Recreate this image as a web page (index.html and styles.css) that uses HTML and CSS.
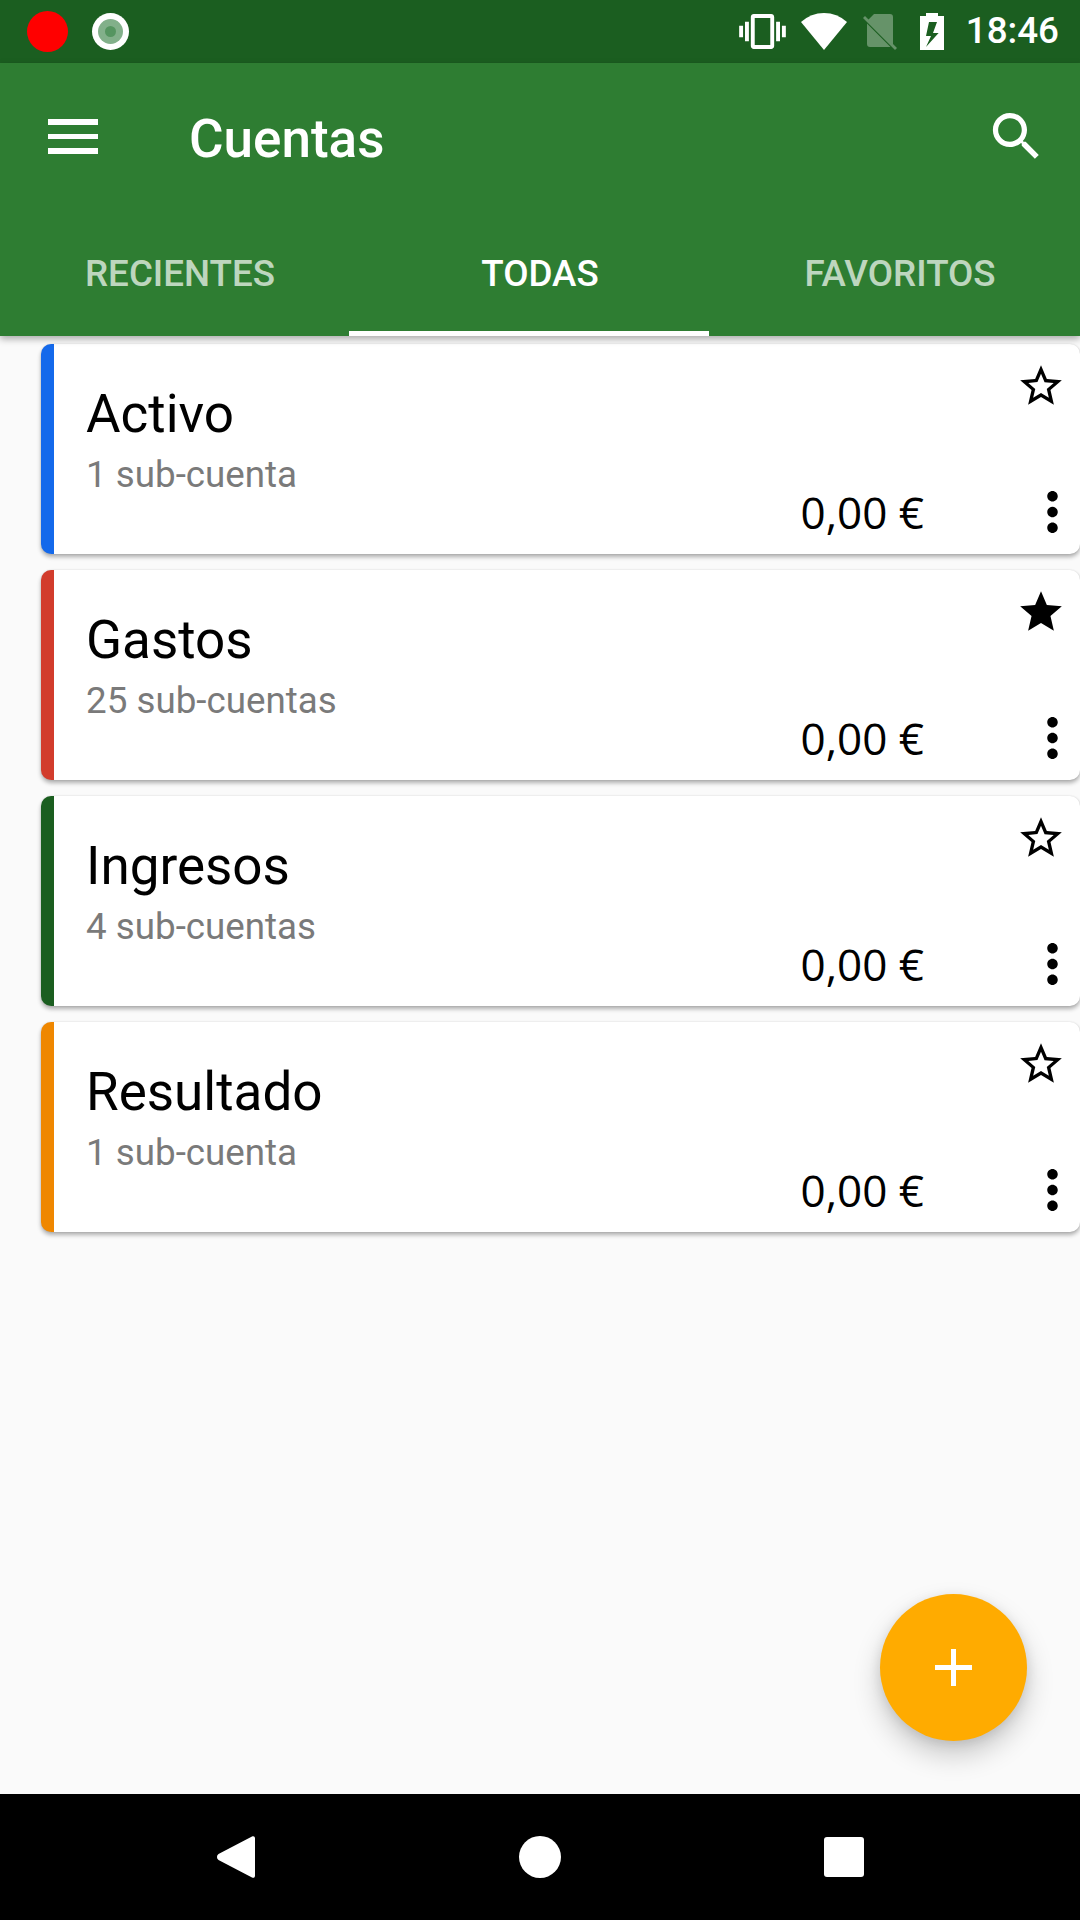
FILE: index.html
```html
<!DOCTYPE html>
<html lang="es">
<head>
<meta charset="utf-8">
<title>Cuentas</title>
<link rel="stylesheet" href="styles.css">
</head>
<body>
<div class="screen">
  <header class="statusbar">
    <div class="status-left">
      <span class="rec-dot"></span>
      <span class="rec-ring"><span class="rec-ring-inner"><span class="rec-ring-core"></span></span></span>
    </div>
    <div class="status-right">
      <svg class="ic-vibrate" viewBox="0 3 24 18"><path fill="#fff" d="M0 15h2V9H0v6zm3 2h2V7H3v10zm19-8v6h2V9h-2zm-3 8h2V7h-2v10zM16.5 3h-9C6.67 3 6 3.67 6 4.5v15c0 .83.67 1.5 1.5 1.5h9c.83 0 1.5-.67 1.5-1.5v-15c0-.83-.67-1.5-1.5-1.5zM16 19H8V5h8v14z"/></svg>
      <svg class="ic-wifi" viewBox="0 0 46 37"><path fill="#fff" d="M23 37L0 9Q10 0 23 0T46 9z"/></svg>
      <svg class="ic-sim" viewBox="0 0 36 37"><path fill="#fff" fill-opacity=".33" d="M5.500 6.500L11 1H27a3 3 0 0 1 3 3V31zM4 10.500L27.500 34H7a3 3 0 0 1-3-3zM2 3L34 35L32 37L0 5z"/></svg>
      <svg class="ic-battery" viewBox="0 0 24 37"><path fill="#fff" fill-rule="evenodd" d="M6 0h12v3h6v34H0V3h6zM9 9h8l-4 11h5.600L6 34l5-11H6z"/></svg>
      <span class="clock">18:46</span>
    </div>
  </header>

  <div class="appbar">
    <div class="toolbar">
      <svg class="ic-menu" viewBox="0 0 50 35"><path fill="#fff" d="M0 0h50v6H0zM0 15h50v5H0zM0 29h50v6H0z"/></svg>
      <h1 class="title">Cuentas</h1>
      <svg class="ic-search" viewBox="0 0 24 24"><path fill="#fff" d="M15.500 14h-.79l-.28-.27C15.410 12.590 16 11.110 16 9.500 16 5.910 13.090 3 9.500 3S3 5.910 3 9.500 5.910 16 9.500 16c1.610 0 3.090-.59 4.230-1.570l.27.28v.79l5 4.990L20.490 19l-4.990-5zm-6 0C7.010 14 5 11.990 5 9.500S7.010 5 9.500 5 14 7.010 14 9.500 11.990 14 9.500 14z"/></svg>
    </div>
    <nav class="tabs">
      <div class="tab">RECIENTES</div>
      <div class="tab tab-active">TODAS</div>
      <div class="tab">FAVORITOS</div>
    </nav>
  </div>

  <main class="content">
    <article class="card card-blue">
      <div class="card-main">
        <div class="card-title">Activo</div>
        <div class="card-sub">1 sub-cuenta</div>
      </div>
      <div class="card-amount">0,00 €</div>
      <div class="card-actions">
        <svg class="ic-star" viewBox="0 0 24 24"><path d="M22 9.240l-7.190-.62L12 2 9.190 8.630 2 9.240l5.460 4.730L5.820 21 12 17.270 18.180 21l-1.630-7.030L22 9.240zM12 15.400l-3.760 2.270 1-4.280-3.320-2.880 4.380-.38L12 6.100l1.710 4.040 4.380.38-3.320 2.880 1 4.280L12 15.400z"/></svg>
        <svg class="ic-more" viewBox="8 4 8 16"><path d="M12 8c1.100 0 2-.9 2-2s-.9-2-2-2-2 .9-2 2 .9 2 2 2zm0 2c-1.100 0-2 .9-2 2s.9 2 2 2 2-.9 2-2-.9-2-2-2zm0 6c-1.100 0-2 .9-2 2s.9 2 2 2 2-.9 2-2-.9-2-2-2z"/></svg>
      </div>
    </article>
    <article class="card card-red">
      <div class="card-main">
        <div class="card-title">Gastos</div>
        <div class="card-sub">25 sub-cuentas</div>
      </div>
      <div class="card-amount">0,00 €</div>
      <div class="card-actions">
        <svg class="ic-star" viewBox="0 0 24 24"><path d="M12 17.270L18.180 21l-1.640-7.030L22 9.240l-7.190-.61L12 2 9.190 8.630 2 9.240l5.460 4.730L5.820 21z"/></svg>
        <svg class="ic-more" viewBox="8 4 8 16"><path d="M12 8c1.100 0 2-.9 2-2s-.9-2-2-2-2 .9-2 2 .9 2 2 2zm0 2c-1.100 0-2 .9-2 2s.9 2 2 2 2-.9 2-2-.9-2-2-2zm0 6c-1.100 0-2 .9-2 2s.9 2 2 2 2-.9 2-2-.9-2-2-2z"/></svg>
      </div>
    </article>
    <article class="card card-green">
      <div class="card-main">
        <div class="card-title">Ingresos</div>
        <div class="card-sub">4 sub-cuentas</div>
      </div>
      <div class="card-amount">0,00 €</div>
      <div class="card-actions">
        <svg class="ic-star" viewBox="0 0 24 24"><path d="M22 9.240l-7.190-.62L12 2 9.190 8.630 2 9.240l5.460 4.730L5.820 21 12 17.270 18.180 21l-1.630-7.030L22 9.240zM12 15.400l-3.760 2.270 1-4.280-3.320-2.880 4.380-.38L12 6.100l1.710 4.040 4.380.38-3.320 2.880 1 4.280L12 15.400z"/></svg>
        <svg class="ic-more" viewBox="8 4 8 16"><path d="M12 8c1.100 0 2-.9 2-2s-.9-2-2-2-2 .9-2 2 .9 2 2 2zm0 2c-1.100 0-2 .9-2 2s.9 2 2 2 2-.9 2-2-.9-2-2-2zm0 6c-1.100 0-2 .9-2 2s.9 2 2 2 2-.9 2-2-.9-2-2-2z"/></svg>
      </div>
    </article>
    <article class="card card-orange">
      <div class="card-main">
        <div class="card-title">Resultado</div>
        <div class="card-sub">1 sub-cuenta</div>
      </div>
      <div class="card-amount">0,00 €</div>
      <div class="card-actions">
        <svg class="ic-star" viewBox="0 0 24 24"><path d="M22 9.240l-7.190-.62L12 2 9.190 8.630 2 9.240l5.460 4.730L5.820 21 12 17.270 18.180 21l-1.630-7.030L22 9.240zM12 15.400l-3.760 2.270 1-4.280-3.320-2.880 4.380-.38L12 6.100l1.710 4.040 4.380.38-3.320 2.880 1 4.280L12 15.400z"/></svg>
        <svg class="ic-more" viewBox="8 4 8 16"><path d="M12 8c1.100 0 2-.9 2-2s-.9-2-2-2-2 .9-2 2 .9 2 2 2zm0 2c-1.100 0-2 .9-2 2s.9 2 2 2 2-.9 2-2-.9-2-2-2zm0 6c-1.100 0-2 .9-2 2s.9 2 2 2 2-.9 2-2-.9-2-2-2z"/></svg>
      </div>
    </article>
    <button class="fab" type="button" aria-label="Añadir">
      <svg class="ic-plus" viewBox="0 0 37 37"><path fill="#fff" d="M16 0h5v16h16v5H21v16h-5V21H0v-5h16z"/></svg>
    </button>
  </main>

  <footer class="navbar">
    <svg class="ic-back" viewBox="0 0 38 42"><path fill="#fff" d="M35 .5c1.700-.9 3 0 3 2v37c0 2-1.300 2.900-3 2L1.500 24c-2-1.500-2-4.500 0-6z"/></svg>
    <span class="ic-home"></span>
    <span class="ic-recent"></span>
  </footer>
</div>
</body>
</html>
```
FILE: styles.css
```css
* { box-sizing: border-box; }
html, body { margin: 0; padding: 0; }
body { font-family: Roboto, "Noto Sans", sans-serif; background: #fafafa; }
svg { display: block; flex: none; }

.screen { width: 1080px; height: 1920px; display: flex; flex-direction: column; overflow: hidden; background: #fafafa; }

/* status bar */
.statusbar { height: 63px; flex: none; display: flex; justify-content: space-between; align-items: center; background: #1b5e20; padding: 0 21px 0 27px; }
.status-left { display: flex; align-items: center; gap: 24px; }
.rec-dot { width: 41px; height: 41px; border-radius: 50%; background: #f00; }
.rec-ring { width: 37px; height: 37px; border-radius: 50%; background: #fff; display: flex; align-items: center; justify-content: center; }
.rec-ring-inner { width: 25px; height: 25px; border-radius: 50%; background: #82b08a; display: flex; align-items: center; justify-content: center; }
.rec-ring-core { width: 11px; height: 11px; border-radius: 50%; background: #559560; }
.status-right { display: flex; align-items: center; }
.ic-vibrate { width: 47px; height: 35px; margin-right: 15px; }
.ic-wifi { width: 46px; height: 37px; margin-right: 16px; }
.ic-sim { width: 36px; height: 37px; margin-right: 21px; }
.ic-battery { width: 24px; height: 37px; margin-right: 22px; }
.clock { color: #fff; font-size: 36.75px; line-height: 1; font-weight: 500; }

/* app bar */
.appbar { flex: none; background: #2e7d32; box-shadow: 0 3px 7px rgba(0,0,0,.32); position: relative; z-index: 2; }
.toolbar { height: 147px; display: flex; align-items: center; padding: 0 32px 0 48px; }
.ic-menu { width: 50px; height: 35px; }
.title { margin: 5px 0 0 91px; flex: 1; color: #fff; font-size: 53px; font-weight: 500; line-height: 1; }
.ic-search { width: 63px; height: 63px; }
.tabs { height: 126px; display: flex; }
.tab { flex: 1; position: relative; display: flex; align-items: center; justify-content: center; color: rgba(255,255,255,.7); font-size: 36.75px; font-weight: 500; }
.tab-active { color: #fff; }
.tab-active::after { content: ""; position: absolute; left: -11px; right: 11px; bottom: 0; height: 5px; background: #fff; }

/* cards */
.content { flex: 1; position: relative; padding: 8px 0 0 41px; display: flex; flex-direction: column; gap: 16px; }
.card { height: 210px; display: flex; background: #fff; border-radius: 10px; border-left: 13px solid #000; box-shadow: 0 3px 4px rgba(0,0,0,.3), 0 0 2px rgba(0,0,0,.12); }
.card-blue { border-left-color: #1469eb; }
.card-red { border-left-color: #d23c2c; }
.card-green { border-left-color: #1b5e20; }
.card-orange { border-left-color: #ef8700; }
.card-main { flex: 1; padding: 39px 0 0 32px; }
.card-title { color: #000; font-size: 53px; line-height: 62px; }
.card-sub { color: #7a7a7a; font-size: 36.75px; line-height: 44px; margin-top: 8px; }
.card-amount { align-self: flex-end; margin: 0 92px 10px 0; font-family: "Open Sans", sans-serif; font-size: 44px; line-height: 64px; color: #000; }
.card-actions { width: 64px; display: flex; flex-direction: column; justify-content: space-between; align-items: flex-end; padding: 17px 0 0; }
.ic-star { width: 50px; height: 50px; margin-right: 14px; }
.ic-more { width: 21px; height: 42px; margin: 0 17px 21px 0; }

/* fab */
.fab { position: absolute; left: 880px; top: 1258px; width: 147px; height: 147px; border: 0; padding: 0; border-radius: 50%; background: #ffab00; box-shadow: 0 14px 28px rgba(0,0,0,.2), 0 3px 12px rgba(0,0,0,.1); display: flex; align-items: center; justify-content: center; }
.ic-plus { width: 37px; height: 37px; }

/* nav bar */
.navbar { height: 126px; flex: none; background: #000; display: flex; align-items: center; justify-content: space-between; padding: 0 216px 0 217px; position: relative; z-index: 3; }
.ic-back { width: 38px; height: 42px; }
.ic-home { width: 42px; height: 42px; border-radius: 50%; background: #fff; }
.ic-recent { width: 40px; height: 40px; border-radius: 3px; background: #fff; }
```
